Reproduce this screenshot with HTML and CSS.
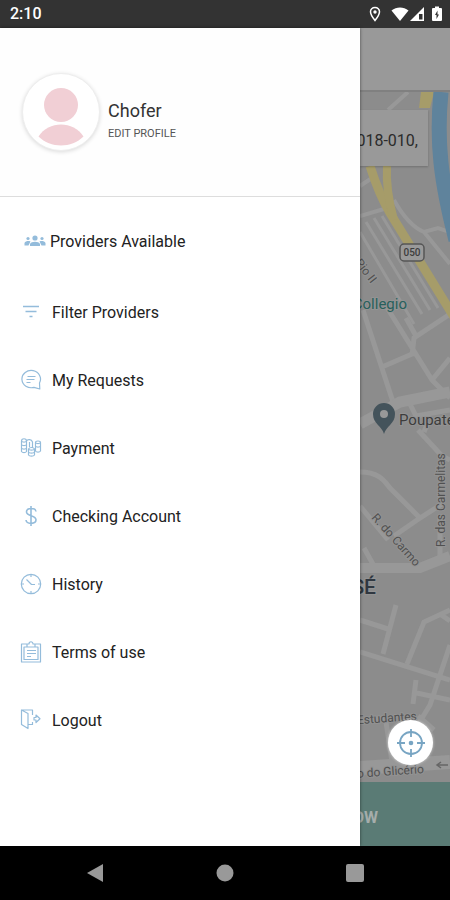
FILE: index.html
```html
<!DOCTYPE html>
<html lang="en">
<head>
<meta charset="utf-8">
<meta name="viewport" content="width=device-width, initial-scale=1">
<title>Menu</title>
<link rel="stylesheet" href="styles.css">
</head>
<body>
<header class="status">
  <time class="clock">2:10</time>
  <svg class="status-icons" viewBox="0 0 76 20" aria-hidden="true">
    <path d="M9 3.500c-2.700 0-4.500 1.900-4.500 4.300C4.500 11 9 16.500 9 16.500s4.500-5.500 4.500-8.700C13.500 5.400 11.700 3.500 9 3.500z" fill="none" stroke="#fff" stroke-width="1.500"/>
    <circle cx="9" cy="8" r="1.700" fill="#fff"/>
    <path d="M25.500 6.500c5-4 12-4 17 0L34 17z" fill="#fff"/>
    <path d="M58 3v14H44z" fill="#fff"/><path d="M53 10h3.500v5.500H53z" fill="#333"/>
    <path d="M67 4h2V2.500h4V4h2a1 1 0 0 1 1 1v11a1 1 0 0 1-1 1h-8a1 1 0 0 1-1-1V5a1 1 0 0 1 1-1z" fill="#fff"/>
    <path d="M71.500 6.500 69 11h1.500v4l2.500-4.500h-1.500z" fill="#333"/>
  </svg>
</header>

<main class="screen">
  <aside class="drawer">
    <section class="profile">
      <svg class="avatar" viewBox="0 0 76 76" aria-hidden="true">
        <circle cx="38" cy="31" r="17" fill="#f1cfd5"/>
        <path d="M15.500 62.500c10-16 35-16 45 0-12 12-33 12-45 0z" fill="#f1cfd5"/>
      </svg>
      <div class="who">
        <h1 class="name">Chofer</h1>
        <a class="edit" href="#profile">EDIT PROFILE</a>
      </div>
    </section>
    <nav class="menu">
      <a class="item item-first" href="#providers">
        <svg class="icon" viewBox="0 0 22 22" aria-hidden="true"><g fill="#94bcdb"><circle cx="11" cy="8" r="2.600"/><circle cx="4" cy="8.500" r="1.600"/><circle cx="18" cy="8.500" r="1.600"/><path d="M6 16v-2c1-3 9-3 10 0v2zM.5 15.500V13c1-2 4-2.500 6-1.500l-2 4zM21.500 15.500V13c-1-2-4-2.500-6-1.500l2 4z"/></g></svg>
        <span>Providers Available</span></a>
      <a class="item" href="#filter">
        <svg class="icon" viewBox="0 0 22 22" aria-hidden="true"><path d="M3 5.500h16M5.500 10.500h11M9.500 15.500h3" class="line thick"/></svg>
        <span>Filter Providers</span></a>
      <a class="item" href="#requests">
        <svg class="icon" viewBox="0 0 22 22" aria-hidden="true"><path d="M14 18.300A9.300 8.600 0 1 1 19.500 14l.3 6zM7.500 7.500h8M6.500 10.500h8M6.500 13.500h4" class="line"/></svg>
        <span>My Requests</span></a>
      <a class="item" href="#payment">
        <svg class="icon" viewBox="0 0 22 22" aria-hidden="true"><path d="M1.500 4v10.500c1 1.500 4 1.500 5 0V4c0-3-5-3-5 0zm0 0c1 1.500 4 1.500 5 0M1.500 7.500c1 1.500 4 1.500 5 0M1.500 11c1 1.500 4 1.500 5 0M6.500 4c1-2 5-2 6 1v6M8.500 12v6c1 1.500 5 1.500 6 0v-6c-1-2-5-2-6 0zm0 0c1 1.500 5 1.500 6 0M8.500 15c1 1.500 5 1.500 6 0M15.500 5.500V14c1 1.500 4 1.500 5 0V5.500c0-2-5-2-5 0zm0 0c1 1.500 4 1.500 5 0M15.500 9c1 1.500 4 1.500 5 0M9.500 5v5" class="line"/></svg>
        <span>Payment</span></a>
      <a class="item" href="#account">
        <svg class="icon" viewBox="0 0 22 22" aria-hidden="true"><path d="M11 1v20M16 6.500C15.500 2.500 6.500 2.500 6.500 7c0 4.500 9.500 3 9.500 7.800 0 4.700-9.500 4.700-10 .2" class="line thick"/></svg>
        <span>Checking Account</span></a>
      <a class="item" href="#history">
        <svg class="icon" viewBox="0 0 22 22" aria-hidden="true"><circle cx="11" cy="11" r="9.700" class="line"/><path d="M11 1.500V4M11 18v2.500M1.500 11H4M18 11h2.500M6.500 6.500l5 5H15" class="line"/></svg>
        <span>History</span></a>
      <a class="item" href="#terms">
        <svg class="icon" viewBox="0 0 22 22" aria-hidden="true"><path d="M7 3H1.500v18h19V3H15M7 6h8V3h-2c0-3-4-3-4 0H7zM7 6H4v12.500h14V6h-3M7 9.500h9M7 12.500h9M7 15.500h4" class="line"/></svg>
        <span>Terms of use</span></a>
      <a class="item" href="#logout">
        <svg class="icon" viewBox="0 0 22 22" aria-hidden="true"><path d="M1.500 1v14.500L8 19.500V4.500zh11V6M8 15.500h4.500V13M14 8.500h2V6l4 3.700L16 13.500V11h-2z" class="line"/></svg>
        <span>Logout</span></a>
    </nav>
  </aside>

  <div class="behind">
    <div class="toolbar"></div>
    <div class="map">
      <svg class="streets" viewBox="360 92 90 690" preserveAspectRatio="xMidYMid slice" role="img" aria-label="Map">
        <path d="M360 92h90v690h-90z" fill="#8c8c8c"/>
        <g fill="none" stroke="#989898">
          <path d="M388 110l20-18M360 186l12-8M360 216l24-7M394 200c10 18 20 28 30 32l14-4 12 4M424 232l26 32" stroke-width="4"/>
          <path d="M360 232l54 92M366 222l56 92M374 218l56 92M382 216l56 92" stroke-width="3"/>
          <path d="M363 310l30 92M386 306l46 74 18 18M382 367l30-13M412 356l2-18 36-24M406 318l10 18M432 380l18-22M410 404l6 12 34-6M418 430l24 26 8 4M360 472c20 0 25 10 30 16l30 30 22-14M420 518l-26 18M360 506l28 34M364 548l10 18M440 515v42M424 432l4-10" stroke-width="5"/>
          <path d="M360 424l40-22 50-10" stroke-width="11"/>
          <path d="M360 568h60l30-12" stroke-width="10"/>
          <path d="M360 620l28 9M396 605l-13 49M360 652l90 28M450 610l-26 12-17 42M440 614l10 7M450 645l-20 60-11 18M416 680l-3 24M412 692l38 8M360 722l24-4M418 716l16 14M386 722l6 40" stroke-width="5"/>
          <path d="M360 768l90-6" stroke-width="14"/>
        </g>
        <path d="M421 92h13l-4 16h-11z" fill="#a69c69"/>
        <path d="M370 166c7 22 14 37 20 47l64 104" fill="none" stroke="#a69c69" stroke-width="9"/>
        <path d="M387 166c-1 18 1 32 7 54" fill="none" stroke="#a69c69" stroke-width="8"/>
        <path d="M441 92c-5 50 0 90 15 148" fill="none" stroke="#5f839c" stroke-width="15"/>
        <rect x="400" y="244" width="24" height="17" rx="4" fill="#999" stroke="#555" stroke-width="1.500"/>
        <g fill="#3d3d3d" class="labels">
          <text x="412" y="256" text-anchor="middle" class="shield">050</text>
          <text x="371" y="284" text-anchor="end" transform="rotate(52 371 284)" class="street">Pio II</text>
          <text x="407" y="309" text-anchor="end" class="place teal">Collegio</text>
          <text x="399" y="425" class="place">Poupatempo</text>
          <text transform="translate(371 518) rotate(48)" class="street">R. do Carmo</text>
          <text transform="translate(445 547) rotate(-90)" class="street">R. das Carmelitas</text>
          <text x="376" y="594" text-anchor="end" class="district">SÉ</text>
          <text x="417" y="720" text-anchor="end" transform="rotate(-4 417 720)" class="street">Estudantes</text>
          <text x="424" y="773" text-anchor="end" transform="rotate(-4 424 773)" class="street">o do Glicério</text>
        </g>
        <path d="M384 434c-2-8-11-10-11-20a11 11 0 0 1 22 0c0 10-9 12-11 20z" fill="#44535b"/>
        <circle cx="384" cy="414" r="4" fill="#999"/>
        <path d="M448 765h-11m4-3-4 3 4 3" fill="none" stroke="#666" stroke-width="1.500"/>
      </svg>
      <div class="address"><span>18018-010,</span></div>
      <button class="locate" aria-label="Center on my location">
        <svg viewBox="0 0 28 28" aria-hidden="true"><circle cx="14" cy="14" r="11" fill="none" stroke="#78a5c3" stroke-width="1.800"/><path d="M14 0v8M14 20v8M0 14h8M20 14h8" stroke="#78a5c3" stroke-width="1.800"/><circle cx="14" cy="14" r="2.300" fill="#78a5c3"/></svg>
      </button>
    </div>
    <button class="now"><span>NOW</span></button>
  </div>
</main>

<footer class="system">
  <button aria-label="Back"><svg viewBox="0 0 20 20" aria-hidden="true"><path d="M2 10 18 1v18z"/></svg></button>
  <button aria-label="Home"><svg viewBox="0 0 20 20" aria-hidden="true"><circle cx="10" cy="10" r="8.500"/></svg></button>
  <button aria-label="Recent apps"><svg viewBox="0 0 20 20" aria-hidden="true"><rect x="1" y="1" width="18" height="18" rx="2"/></svg></button>
</footer>
</body>
</html>
```

FILE: styles.css
```css
* { box-sizing: border-box; }

body {
  margin: 0;
  min-height: 100vh;
  display: flex;
  flex-direction: column;
  font-family: Roboto, "Liberation Sans", sans-serif;
  background: #000;
}

button { border: 0; padding: 0; font: inherit; }
a { color: inherit; text-decoration: none; }

.status {
  height: 28px;
  padding: 0 8px 0 10px;
  display: flex;
  align-items: center;
  justify-content: space-between;
  background: #333;
  color: #fff;
}
.clock { font-size: 16px; font-weight: 500; line-height: 30px; }
.status-icons { width: 76px; height: 20px; }

.screen {
  flex: 1;
  display: grid;
  grid-template-columns: 4fr 1fr;
}

.drawer {
  background: #fff;
  position: relative;
  z-index: 1;
  box-shadow: 0 0 3px rgba(0, 0, 0, 0.5);
}
.profile {
  height: 169px;
  padding: 0 22px;
  display: flex;
  align-items: center;
  gap: 8px;
  background: #fefefe;
  border-bottom: 1px solid #ddd;
}
.avatar {
  width: 78px;
  height: 78px;
  border: 1px solid #eee;
  border-radius: 50%;
  background: #fff;
  box-shadow: 0 1px 4px rgba(0, 0, 0, 0.15);
}
.who {
  display: flex;
  flex-direction: column;
  padding-top: 20px;
}
.name {
  margin: 0;
  font-size: 18px;
  line-height: 24px;
  font-weight: 400;
  color: #333;
}
.edit {
  font-size: 11px;
  line-height: 22px;
  color: #555;
}

.menu { padding-top: 7px; }
.item {
  height: 68px;
  padding-left: 20px;
  display: flex;
  align-items: center;
  gap: 10px;
  font-size: 16px;
  color: #222;
}
.item-first {
  height: 74px;
  padding-left: 24px;
  gap: 4px;
}
.icon { width: 22px; height: 22px; }
.line {
  fill: none;
  stroke: #94bcdb;
  stroke-width: 1.2;
  stroke-linejoin: round;
}
.thick { stroke-width: 1.6; }

.behind {
  min-width: 0;
  display: flex;
  flex-direction: column;
  overflow: hidden;
}
.toolbar {
  height: 64px;
  background: #999;
  border-bottom: 2px solid #808080;
}
.map {
  flex: 1;
  position: relative;
  min-height: 0;
}
.streets {
  position: absolute;
  width: 100%;
  height: 100%;
}
.labels text {
  paint-order: stroke;
  stroke: #939393;
  stroke-width: 2px;
}
.labels .shield { font-size: 10px; font-weight: 500; stroke: none; }
.labels .street { font-size: 12px; fill: #505050; }
.labels .place { font-size: 15px; }
.labels .teal { fill: #28605c; }
.labels .district { font-size: 21px; font-weight: 500; fill: #2f3740; }

.address {
  position: absolute;
  top: 18px;
  left: 0;
  right: 22px;
  height: 56px;
  padding-right: 10px;
  display: flex;
  align-items: center;
  justify-content: flex-end;
  overflow: hidden;
  white-space: nowrap;
  background: #999;
  box-shadow: 0 1px 2px rgba(0, 0, 0, 0.2);
  color: #2b2b2b;
  font-size: 16px;
  line-height: 24px;
}
.address span { padding-top: 6px; }
.locate {
  position: absolute;
  right: 17px;
  bottom: 17px;
  width: 45px;
  height: 45px;
  display: grid;
  place-items: center;
  border-radius: 50%;
  background: #fff;
  box-shadow: 0 0 3px rgba(255, 255, 255, 0.6);
}
.locate svg { width: 28px; height: 28px; }

.now {
  height: 64px;
  padding-right: 72px;
  display: flex;
  align-items: center;
  justify-content: flex-end;
  background: #5a7b75;
  color: #a5adab;
  font-size: 16px;
  font-weight: 700;
}
.now span { padding-top: 6px; }

.system {
  height: 54px;
  padding: 0 30px;
  display: grid;
  grid-template-columns: repeat(3, 1fr);
  background: #000;
}
.system button {
  display: grid;
  place-items: center;
  background: none;
}
.system svg { width: 20px; height: 20px; fill: #999; }
```
